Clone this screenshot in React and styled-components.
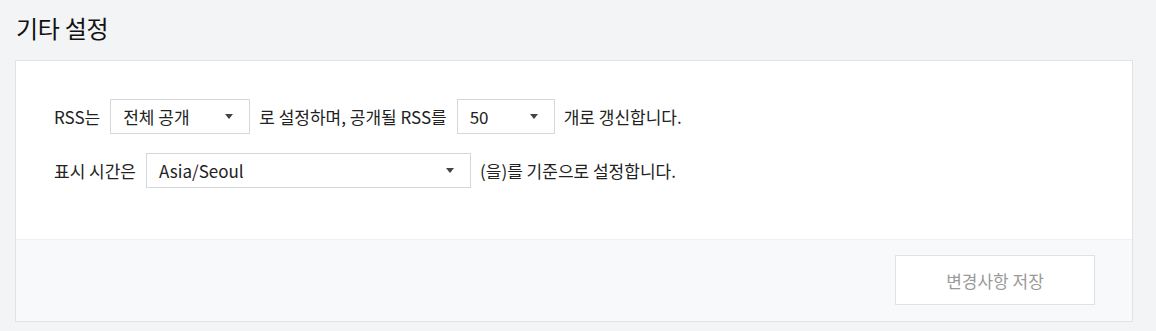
import React from "react";
import styled, { createGlobalStyle } from "styled-components";

const Global = createGlobalStyle`
  html, body { margin: 0; padding: 0; background: #f3f4f6; }
  body { font-family: "Noto Sans CJK KR", "Noto Sans", sans-serif; color: #222; }
`;

const Page = styled.div`
  padding: 0 23px 9px 15px;
`;

const Title = styled.h2`
  margin: 0;
  padding: 11px 0 0 1px;
  height: 60px;
  box-sizing: border-box;
  font-size: 24px;
  font-weight: 400;
  line-height: 34px;
  color: #111;
  letter-spacing: -0.3px;
`;

const Card = styled.section`
  border: 1px solid #e1e3e9;
  background: #fff;
`;

const Body = styled.div`
  padding: 38px 38px 51px 38px;
  display: flex;
  flex-direction: column;
  gap: 19px;
  border-bottom: 1px solid #eef0f3;
`;

const Row = styled.div`
  display: flex;
  align-items: center;
  font-size: 17px;
  color: #222;
  height: 35px;
`;

const Label = styled.span`
  white-space: nowrap;
`;

const Select = styled.div`
  box-sizing: border-box;
  width: ${(p) => p.$w}px;
  height: 35px;
  margin: 0 9px 0 10px;
  border: 1px solid #d3d7de;
  background: #fff;
  display: flex;
  align-items: center;
  justify-content: space-between;
  padding: 0 16px 0 12px;
  font-size: 17px;
  color: #222;
`;

const Arrow = styled.span`
  width: 0;
  height: 0;
  border-left: 4px solid transparent;
  border-right: 4px solid transparent;
  border-top: 5px solid #444;
`;

const Footer = styled.div`
  background: #f8f9fb;
  display: flex;
  justify-content: flex-end;
  padding: 15px 37px 16px;
`;

const SaveButton = styled.button`
  width: 200px;
  height: 50px;
  background: #fff;
  border: 1px solid #dfe2e8;
  font-family: inherit;
  font-size: 17px;
  color: #9a9a9a;
  cursor: default;
`;

export default function App() {
  return (
    <>
      <Global />
      <Page>
        <Title>기타 설정</Title>
        <Card>
          <Body>
            <Row>
              <Label>RSS는</Label>
              <Select $w={140}>
                <span>전체 공개</span>
                <Arrow />
              </Select>
              <Label>로 설정하며, 공개될 RSS를</Label>
              <Select $w={98}>
                <span>50</span>
                <Arrow />
              </Select>
              <Label>개로 갱신합니다.</Label>
            </Row>
            <Row>
              <Label>표시 시간은</Label>
              <Select $w={325}>
                <span>Asia/Seoul</span>
                <Arrow />
              </Select>
              <Label>(을)를 기준으로 설정합니다.</Label>
            </Row>
          </Body>
          <Footer>
            <SaveButton>변경사항 저장</SaveButton>
          </Footer>
        </Card>
      </Page>
    </>
  );
}
